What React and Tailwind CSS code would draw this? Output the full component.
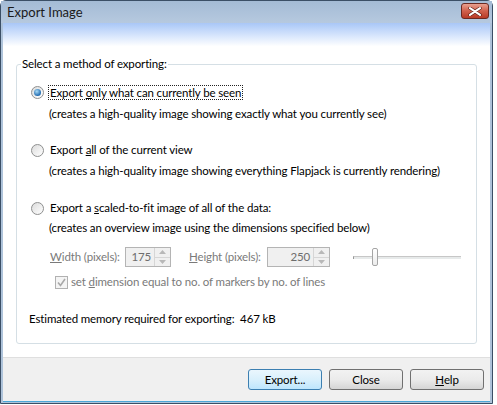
import React from "react";

const font = { fontFamily: "Lato, 'Noto Sans', sans-serif" };

function Radio({ checked }) {
  return (
    <span className="w-[13px] h-[13px] rounded-full border border-[#8e8f8f] bg-gradient-to-br from-[#dcdcdc] to-[#ffffff] flex items-center justify-center shrink-0">
      {checked && (
        <span className="w-[7px] h-[7px] rounded-full bg-[radial-gradient(circle_at_40%_35%,#a9dbf6,#1f6ab0_70%)]" />
      )}
    </span>
  );
}

function Spin({ value, width }) {
  return (
    <div className={`flex h-[20px] border border-[#b4b4b4] bg-[#f0f0f0] ${width}`}>
      <div className="flex-1 text-right pr-[3px] text-[#6d6d6d] leading-[18px]">{value}</div>
      <div className="w-[16px] flex flex-col border-l border-[#d6d6d6]">
        <div className="flex-1 flex items-center justify-center border-b border-[#d6d6d6]">
          <svg width="7" height="4" viewBox="0 0 7 4"><path d="M0 4 L3.5 0 L7 4 Z" fill="#b8b8b8" /></svg>
        </div>
        <div className="flex-1 flex items-center justify-center">
          <svg width="7" height="4" viewBox="0 0 7 4"><path d="M0 0 L3.5 4 L7 0 Z" fill="#b8b8b8" /></svg>
        </div>
      </div>
    </div>
  );
}

function Button({ children, primary }) {
  return (
    <div
      className={`w-[74px] h-[21px] rounded-[3px] border flex items-center justify-center text-black ${
        primary
          ? "border-[#3c7fb1] bg-gradient-to-b from-[#eaf6fd] via-[#d9f0fc] to-[#bee6fd]"
          : "border-[#707070] bg-gradient-to-b from-[#f2f2f2] via-[#ebebeb] to-[#d5d5d5]"
      }`}
    >
      {children}
    </div>
  );
}

export default function App() {
  return (
    <div className="w-[497px] h-[405px] bg-white overflow-hidden text-[11.5px] tracking-[-0.13px] text-black" style={font}>
      <div className="w-[493px] h-[404px] border border-[#3b4f66] rounded-t-[6px] bg-[#aec3da] flex flex-col">
        <div className="h-[22px] flex items-center justify-between pl-[6px] pr-[3px] bg-gradient-to-b from-[#a4bbd5] to-[#b6c9df]">
          <span className="text-[13px] tracking-normal text-[#1a1a1a] pt-[2px]">Export Image</span>
          <div className="w-[28px] h-[16px] rounded-[3px] border border-[#6b2a22] bg-gradient-to-b from-[#e8a090] via-[#d0604c] to-[#b93a26] flex items-center justify-center mt-[-2px]">
            <svg width="14" height="9" viewBox="0 0 14 9">
              <path d="M2 1.2 L12 7.8 M12 1.2 L2 7.8" stroke="#5a1a12" strokeWidth="3.4" strokeLinecap="round" />
              <path d="M2 1.2 L12 7.8 M12 1.2 L2 7.8" stroke="#ffffff" strokeWidth="2.2" strokeLinecap="round" />
            </svg>
          </div>
        </div>
        <div className="flex-1 mx-[2px] mb-[1px] border-b border-[#4aa7d8] flex flex-col bg-white">
          <div className="flex-1 bg-gradient-to-b from-[#a9c7f7] to-white to-[7%] px-[13px] pt-[41px]">
            <div className="relative border border-[#d5dfe5] rounded-[3px] h-[280px] pl-[14px] pt-[17px]">
              <span className="absolute left-[4px] top-[-9px] bg-white px-[1px] leading-[16px]">Select a method of exporting:</span>

              <div className="flex items-center gap-[5px] h-[20px]">
                <Radio checked />
                <span className="outline-1 outline-dotted outline-[#222] px-[1px] leading-[13px]">
                  Export <u>o</u>nly what can currently be seen
                </span>
              </div>
              <div className="pl-[18px] mt-[2px] h-[20px] leading-[20px]">(creates a high-quality image showing exactly what you currently see)</div>

              <div className="flex items-center gap-[5px] h-[20px] mt-[16px]">
                <Radio />
                <span className="px-[1px]">Export <u>a</u>ll of the current view</span>
              </div>
              <div className="pl-[18px] mt-[1px] h-[20px] leading-[20px]">(creates a high-quality image showing everything Flapjack is currently rendering)</div>

              <div className="flex items-center gap-[5px] h-[20px] mt-[17px]">
                <Radio />
                <span className="px-[1px]">Export a <u>s</u>caled-to-fit image of all of the data:</span>
              </div>
              <div className="pl-[18px] mt-[0px] h-[20px] leading-[20px]">(creates an overview image using the dimensions specified below)</div>

              <div className="flex items-center pl-[19px] mt-[9px] h-[20px] text-[#7a7a7a]">
                <span className="w-[75px]"><u>W</u>idth (pixels):</span>
                <Spin value="175" width="w-[46px]" />
                <span className="ml-[18px] w-[78px]"><u>H</u>eight (pixels):</span>
                <Spin value="250" width="w-[63px]" />
                <div className="ml-[23px] w-[108px] h-[18px] flex items-center relative">
                  <div className="w-full h-[3px] bg-[#e7eaea] border-t border-[#c7c7c7] border-l border-l-[#999]" />
                  <div className="absolute left-[19px] top-0 w-[6px] h-[18px] rounded-[2px] border border-[#a5a5a5] bg-gradient-to-b from-white to-[#ececec]" />
                </div>
              </div>

              <div className="flex items-center pl-[24px] mt-[5px] h-[20px] gap-[3px] text-[#7a7a7a]">
                <span className="w-[13px] h-[13px] border border-[#b1b1b1] bg-[#f4f4f4] flex items-center justify-center">
                  <svg width="9" height="9" viewBox="0 0 9 9">
                    <path d="M1 4.5 L3.5 7.5 L8 1" stroke="#a8a8a8" strokeWidth="1.6" fill="none" />
                  </svg>
                </span>
                <span>set <u>d</u>imension equal to no. of markers by no. of lines</span>
              </div>

              <div className="mt-[18px] ml-[-2px]">Estimated memory required for exporting:&nbsp; 467 kB</div>
            </div>
          </div>
          <div className="h-[44px] bg-[#f0f0f0] border-t border-[#dfdfdf] flex items-center justify-end gap-[7px] pr-[6px]">
            <Button primary>Export...</Button>
            <Button>Close</Button>
            <Button><u>H</u>elp</Button>
          </div>
        </div>
      </div>
    </div>
  );
}
